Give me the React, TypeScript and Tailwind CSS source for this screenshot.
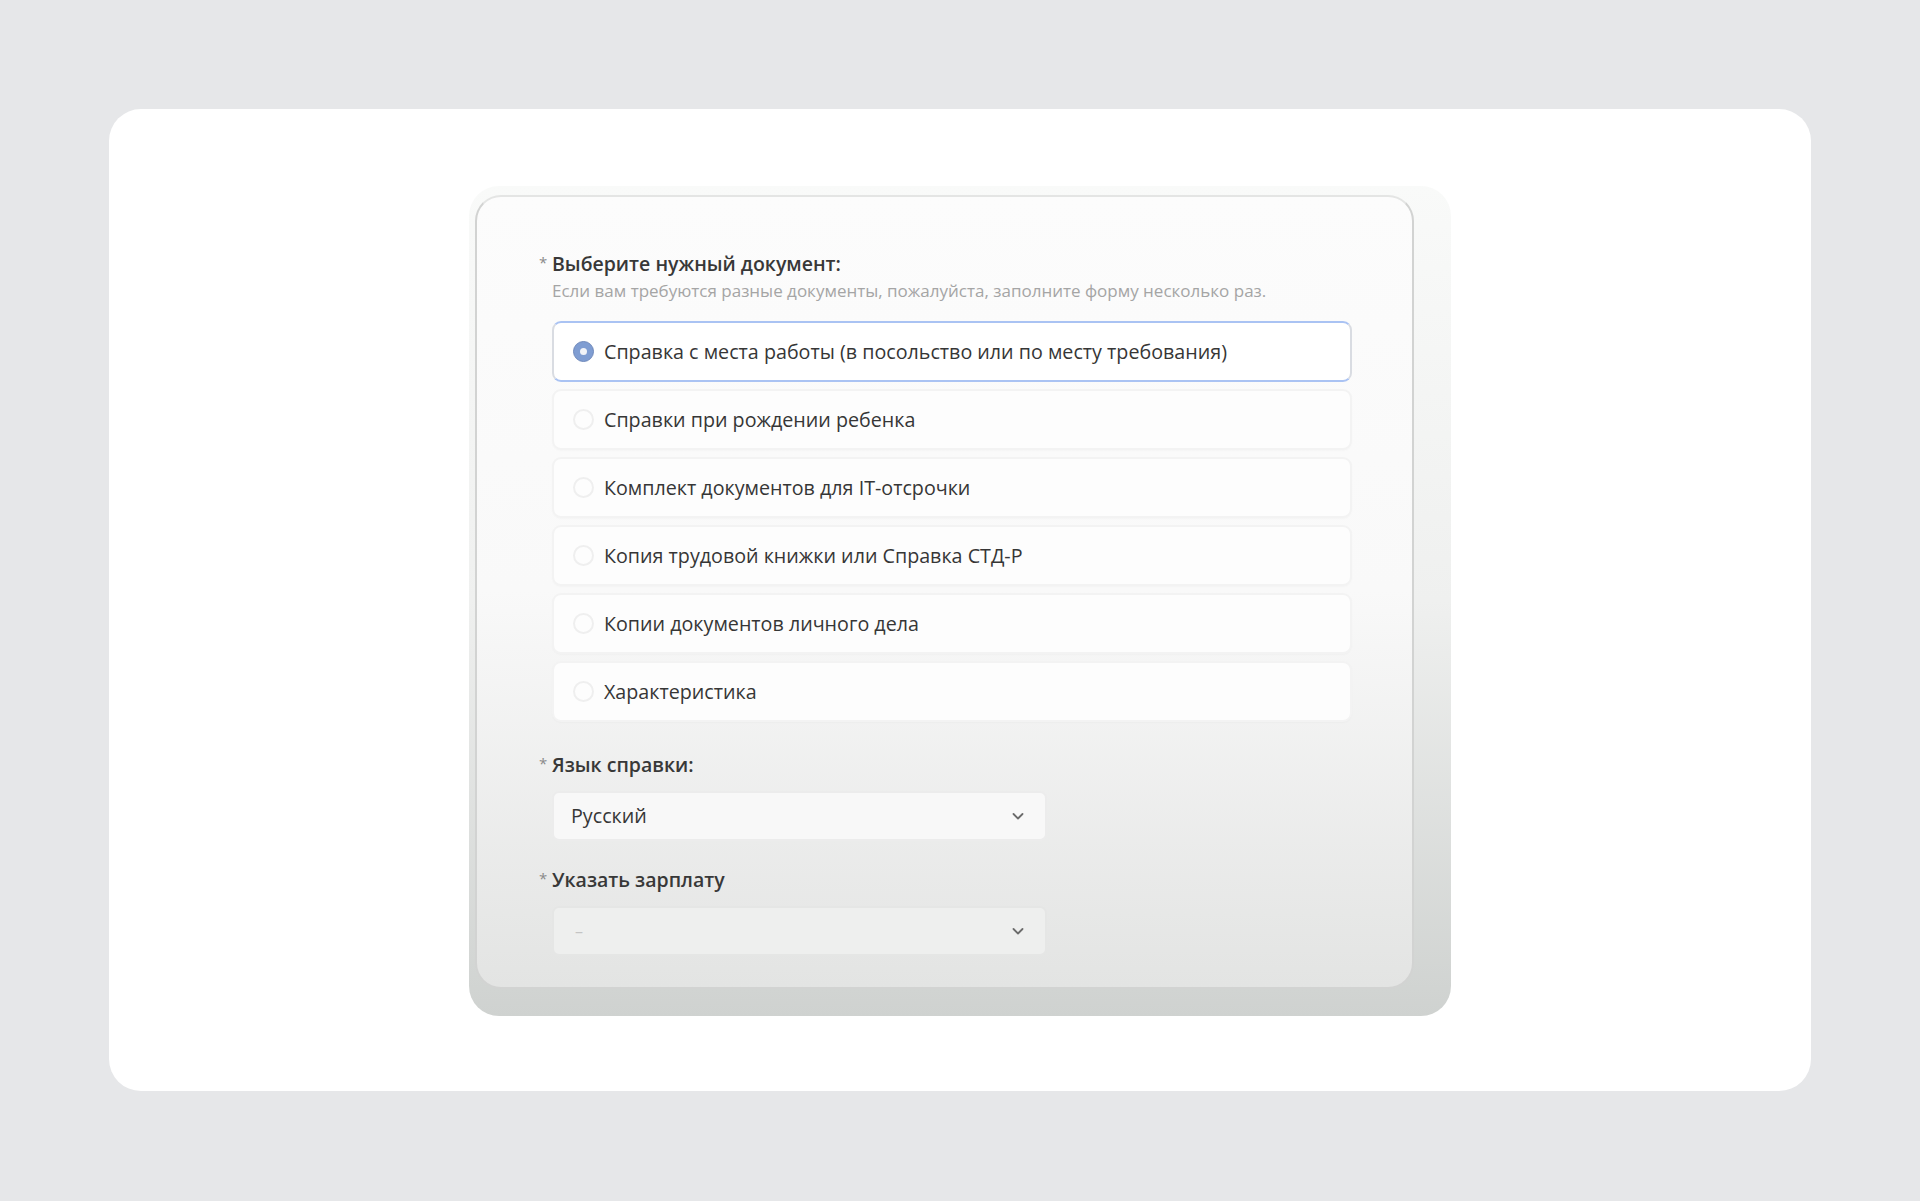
import React from 'react';

const options = [
  'Справка с места работы (в посольство или по месту требования)',
  'Справки при рождении ребенка',
  'Комплект документов для IT-отсрочки',
  'Копия трудовой книжки или Справка СТД-Р',
  'Копии документов личного дела',
  'Характеристика',
];

function Chevron() {
  return (
    <svg width="14" height="14" viewBox="0 0 14 14" fill="none">
      <path d="M2.5 5l4.5 4.5L11.5 5" stroke="#6b6b6b" strokeWidth="1.8" strokeLinecap="round" strokeLinejoin="round" />
    </svg>
  );
}

function Label({ text }: { text: string }) {
  return (
    <div className="flex items-center h-6 text-[19.5px] font-semibold text-[#383838]">
      <span className="w-[13px] text-[#8a8a8a] text-[15px] font-normal -mt-1">*</span>
      {text}
    </div>
  );
}

export default function App() {
  return (
    <div
      className="min-h-screen bg-[#e6e7e9] px-[109px] pt-[109px] pb-[110px]"
      style={{ fontFamily: '"Open Sans", "Liberation Sans", sans-serif' }}
    >
      <div className="h-[982px] bg-white rounded-[32px] flex justify-center pt-[77px]">
        {/* screenshot of the form */}
        <div className="w-[982px] h-[830px] rounded-[30px] bg-gradient-to-b from-[#f9faf9] via-[#eff0ef] to-[#cfd2d0] pl-[6px] pt-[9px]">
          <div className="w-[939px] h-[794px] rounded-[26px] border-2 border-[#d2d3d2] border-t-[#e4e5e4] bg-gradient-to-b from-[#fcfcfc] via-[#f9f9f9] to-[#e3e4e3] pl-[62px] pt-[55px]">
            <Label text="Выберите нужный документ:" />
            <div className="pl-[13px] mt-[5px] h-5 flex items-center text-[17px] text-[#a5a5a5] whitespace-nowrap">
              Если вам требуются разные документы, пожалуйста, заполните форму несколько раз.
            </div>

            <div className="ml-[13px] mt-5 w-[800px] flex flex-col gap-[7px]">
              {options.map((opt, i) => (
                <div
                  key={opt}
                  className={
                    i === 0
                      ? 'h-[61px] rounded-[9px] border-2 border-[#aac3f3] border-l-[#d9dce2] border-r-[#d9dce2] bg-white flex items-center pl-[19px]'
                      : 'h-[61px] rounded-[9px] border-2 border-[#f3f3f3] bg-[#fdfdfd] shadow-[0_1px_2px_rgba(0,0,0,0.025)] flex items-center pl-[19px]'
                  }
                >
                  {i === 0 ? (
                    <span className="w-[21px] h-[21px] rounded-full bg-[#7f9dd2] border border-[#6f89bb] flex items-center justify-center">
                      <span className="w-[7px] h-[7px] rounded-full bg-[#f2f4f8]" />
                    </span>
                  ) : (
                    <span className="w-[21px] h-[21px] rounded-full border-2 border-[#efefef]" />
                  )}
                  <span className="ml-[10px] text-[19.7px] text-[#363636] whitespace-nowrap">{opt}</span>
                </div>
              ))}
            </div>

            <div className="mt-[31px]">
              <Label text="Язык справки:" />
            </div>
            <div className="ml-[13px] mt-[14px] w-[495px] h-[50px] rounded-[7px] border-2 border-[#ececec] bg-[#f8f8f8] flex items-center justify-between pl-[17px] pr-[20px]">
              <span className="text-[19.7px] text-[#363636]">Русский</span>
              <Chevron />
            </div>

            <div className="mt-[27px]">
              <Label text="Указать зарплату" />
            </div>
            <div className="ml-[13px] mt-[14px] w-[495px] h-[50px] rounded-[7px] border-2 border-[#e5e6e5] bg-[#eeefee] flex items-center justify-between pl-[21px] pr-[20px]">
              <span className="text-[16px] text-[#c4c4c4]">–</span>
              <Chevron />
            </div>
          </div>
        </div>
      </div>
    </div>
  );
}
